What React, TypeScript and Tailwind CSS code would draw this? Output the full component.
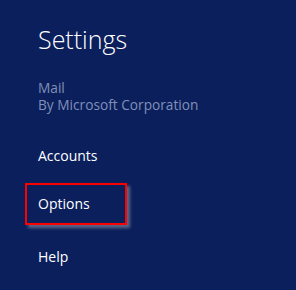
export default function App() {
  const items = ['Accounts', 'Options', 'Help'];

  return (
    <div
      className="w-[296px] h-[290px] bg-[#0a1f5c] pl-[38px] pt-[23px] text-white overflow-hidden"
      style={{ fontFamily: '"Open Sans", "Noto Sans", sans-serif' }}
    >
      <h1 className="text-[25px] leading-[32px] font-light">Settings</h1>

      <div className="mt-[24px] text-[13.7px] leading-[17px] text-[#8190b8]">
        <div>Mail</div>
        <div>By Microsoft Corporation</div>
      </div>

      <ul className="mt-[34px] flex flex-col text-[14px] leading-[18px]">
        {items.map((item) =>
          item === 'Options' ? (
            <li key={item} className="-ml-[13px] mt-[18px] mb-[23px]">
              <div className="w-[102px] h-[42px] border-2 border-[#ff0000] pl-[11px] flex items-center shadow-[3px_3px_3px_rgba(160,160,170,0.55)]">
                {item}
              </div>
            </li>
          ) : (
            <li key={item}>{item}</li>
          )
        )}
      </ul>
    </div>
  );
}
